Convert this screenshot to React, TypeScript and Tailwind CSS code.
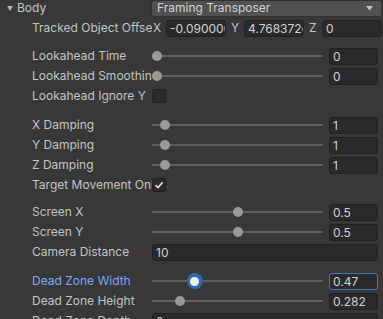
import React from "react";

type Row =
  | { kind: "slider"; label: string; value: string; frac: number; focus?: boolean }
  | { kind: "float"; label: string; value: string }
  | { kind: "toggle"; label: string; on: boolean }
  | { kind: "gap"; h: string };

const rows: Row[] = [
  { kind: "gap", h: "h-[8px]" },
  { kind: "slider", label: "Lookahead Time", value: "0", frac: 0 },
  { kind: "slider", label: "Lookahead Smoothing", value: "0", frac: 0 },
  { kind: "toggle", label: "Lookahead Ignore Y", on: false },
  { kind: "gap", h: "h-[9px]" },
  { kind: "slider", label: "X Damping", value: "1", frac: 0.05 },
  { kind: "slider", label: "Y Damping", value: "1", frac: 0.05 },
  { kind: "slider", label: "Z Damping", value: "1", frac: 0.05 },
  { kind: "toggle", label: "Target Movement Only", on: true },
  { kind: "gap", h: "h-[7px]" },
  { kind: "slider", label: "Screen X", value: "0.5", frac: 0.5 },
  { kind: "slider", label: "Screen Y", value: "0.5", frac: 0.5 },
  { kind: "float", label: "Camera Distance", value: "10" },
  { kind: "gap", h: "h-[9px]" },
  { kind: "slider", label: "Dead Zone Width", value: "0.47", frac: 0.235, focus: true },
  { kind: "slider", label: "Dead Zone Height", value: "0.282", frac: 0.141 },
  { kind: "float", label: "Dead Zone Depth", value: "0" },
];

function Field({ value, focus, className = "" }: { value: string; focus?: boolean; className?: string }) {
  return (
    <div
      className={`h-[17px] rounded-[3px] border bg-[#2a2a2a] pl-[3px] leading-[15px] text-[#d2d2d2] overflow-hidden whitespace-nowrap ${
        focus ? "border-[#3a79bb]" : "border-[#212121]"
      } ${className}`}
    >
      {value}
    </div>
  );
}

function Label({ text, focus }: { text: string; focus?: boolean }) {
  return (
    <div
      className={`w-[120px] shrink-0 overflow-hidden whitespace-nowrap ${
        focus ? "text-[#7babf8]" : "text-[#c4c4c4]"
      }`}
    >
      {text}
    </div>
  );
}

function Slider({ frac, focus }: { frac: number; focus?: boolean }) {
  return (
    <div className="relative h-full flex-1">
      <div className="absolute left-0 right-0 top-[8px] h-[2px] bg-[#5e5e5e]" />
      {focus ? (
        <div
          className="absolute top-[1px] w-[16px] h-[16px] -ml-[3px] rounded-full bg-[#2f6aa8] flex items-center justify-center"
          style={{ left: `calc(${frac} * (100% - 10px))` }}
        >
          <div className="w-[9px] h-[9px] rounded-full bg-[#f0f0f0]" />
        </div>
      ) : (
        <div
          className="absolute top-[4px] w-[10px] h-[10px] rounded-full bg-[#999999]"
          style={{ left: `calc(${frac} * (100% - 10px))` }}
        />
      )}
    </div>
  );
}

function PropRow({ row }: { row: Row }) {
  if (row.kind === "gap") return <div className={row.h} />;
  return (
    <div className="flex h-[18px] items-center pl-[32px] pr-[5px] mb-[2px]">
      <Label text={row.label} focus={row.kind === "slider" && row.focus} />
      {row.kind === "slider" && (
        <div className="flex flex-1 h-full items-center gap-[6px]">
          <Slider frac={row.frac} focus={row.focus} />
          <Field value={row.value} focus={row.focus} className="w-[49px]" />
        </div>
      )}
      {row.kind === "float" && <Field value={row.value} className="flex-1" />}
      {row.kind === "toggle" && (
        <div className="w-[14px] h-[14px] rounded-[2px] border border-[#212121] bg-[#2a2a2a] flex items-center justify-center">
          {row.on && (
            <svg width="10" height="10" viewBox="0 0 10 10">
              <path d="M1.5 5.2 L4 7.6 L8.6 2.2" fill="none" stroke="#e6e6e6" strokeWidth="1.6" />
            </svg>
          )}
        </div>
      )}
    </div>
  );
}

export default function App() {
  return (
    <div
      className="w-[383px] h-[319px] overflow-hidden bg-[#383838] text-[12px]"
      style={{ fontFamily: "Inter, 'Noto Sans', sans-serif" }}
    >
      <div className="-mt-px">
        <div className="flex h-[18px] items-center pr-px mb-[2px]">
          <div className="w-[151px] shrink-0 flex items-center text-[#c4c4c4]">
            <svg width="6" height="5" viewBox="0 0 6 5" className="ml-[7px] mr-[4px]">
              <path d="M0 0 H6 L3 5 Z" fill="#b4b4b4" />
            </svg>
            Body
          </div>
          <div className="flex-1 h-[17px] rounded-[3px] border border-[#303030] bg-[#515151] pl-[5px] pr-[8px] flex items-center justify-between text-[#d2d2d2]">
            <span>Framing Transposer</span>
            <svg width="7" height="5" viewBox="0 0 7 5">
              <path d="M0 0 H7 L3.5 4.5 Z" fill="#c4c4c4" />
            </svg>
          </div>
        </div>
        <div className="flex h-[18px] items-center pl-[32px] pr-px mb-[2px]">
          <Label text="Tracked Object Offset" />
          <div className="grid flex-1 grid-cols-3 gap-[4px]">
            {[
              ["X", "-0.09000001"],
              ["Y", "4.768372e-07"],
              ["Z", "0"],
            ].map(([axis, v]) => (
              <div key={axis} className="flex items-center">
                <span className="w-[14px] shrink-0 pl-px text-[#c4c4c4]">{axis}</span>
                <Field value={v} className="flex-1 min-w-0" />
              </div>
            ))}
          </div>
        </div>
        {rows.map((r, i) => (
          <PropRow key={i} row={r} />
        ))}
      </div>
    </div>
  );
}
